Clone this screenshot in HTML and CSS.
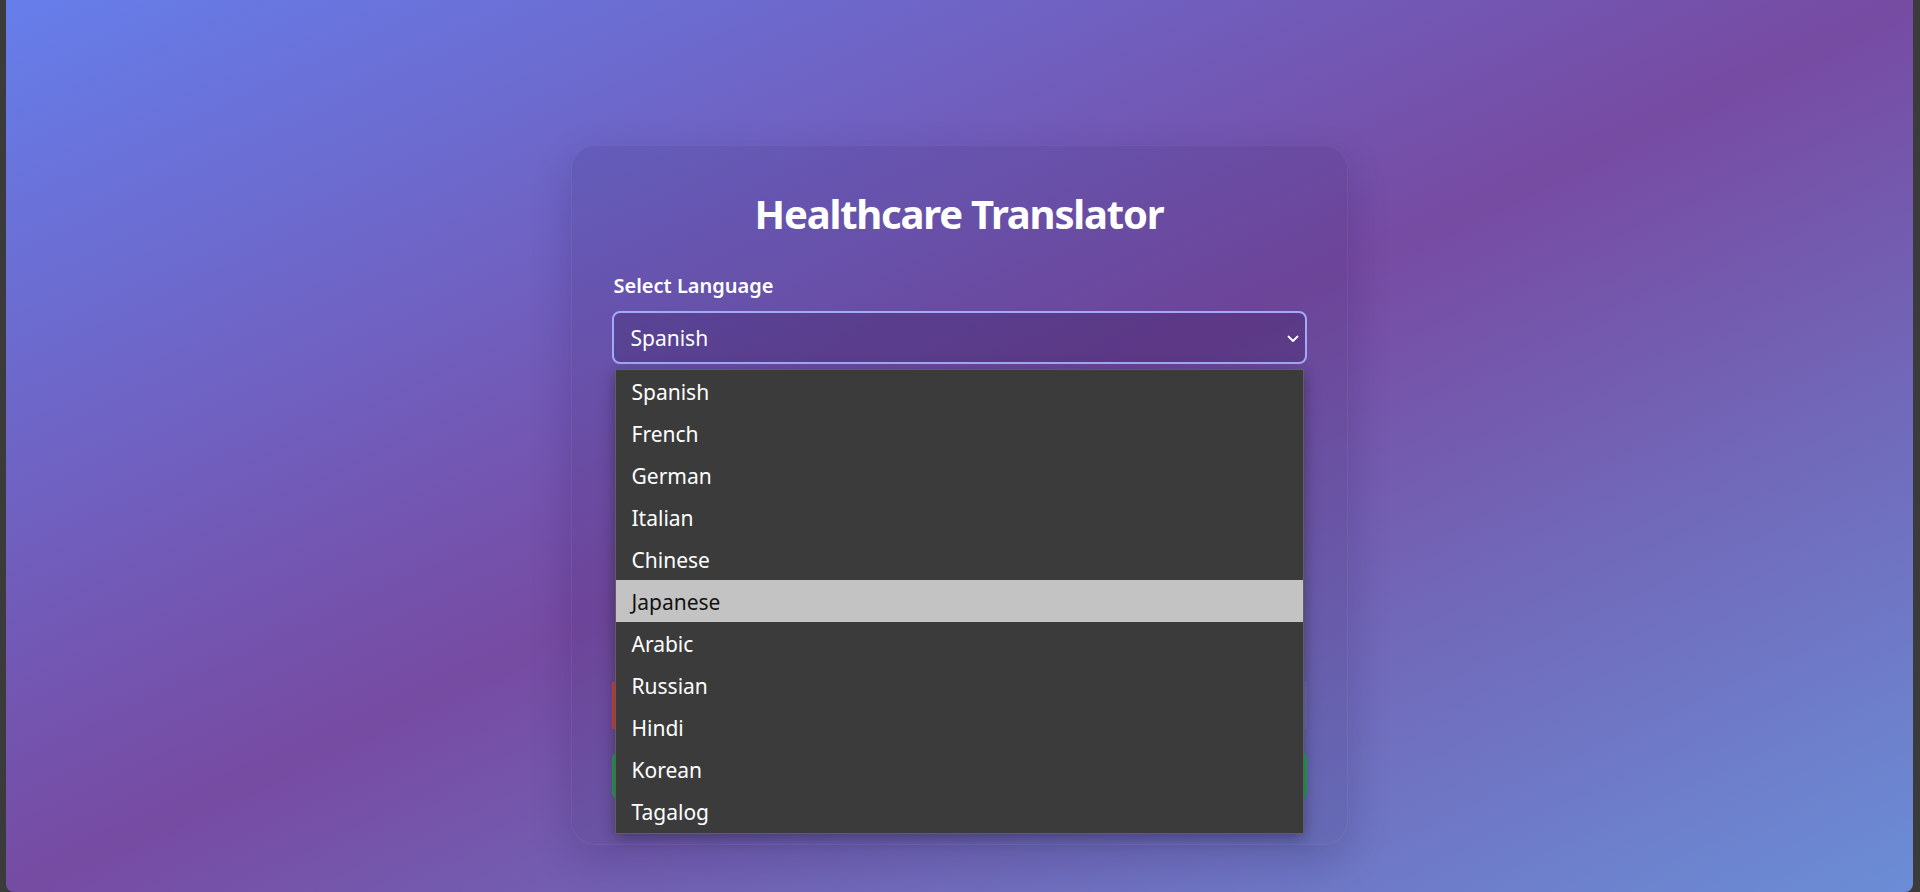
FILE: index.html
```html
<!DOCTYPE html>
<html lang="en">
<head>
<meta charset="utf-8">
<title>Healthcare Translator</title>
<link rel="stylesheet" href="styles.css">
</head>
<body>
<div class="window">
  <main class="page">
    <section class="card">
      <h1 class="title">Healthcare Translator</h1>
      <label class="field-label">Select Language</label>
      <div class="select-wrap">
        <div class="select">
          <span class="select-value">Spanish</span>
          <svg class="chevron" width="12" height="8" viewBox="0 0 12 8" aria-hidden="true"><path d="M1.5 1.5 L6 6 L10.5 1.5" fill="none" stroke="#ffffff" stroke-width="1.8" stroke-linecap="round" stroke-linejoin="round"/></svg>
        </div>
        <ul class="dropdown">
          <li class="option">Spanish</li>
          <li class="option">French</li>
          <li class="option">German</li>
          <li class="option">Italian</li>
          <li class="option">Chinese</li>
          <li class="option option-active">Japanese</li>
          <li class="option">Arabic</li>
          <li class="option">Russian</li>
          <li class="option">Hindi</li>
          <li class="option">Korean</li>
          <li class="option">Tagalog</li>
        </ul>
      </div>
      <div class="status-box"></div>
      <div class="action-btn"></div>
    </section>
  </main>
</div>
</body>
</html>
```
FILE: styles.css
```css
* { box-sizing: border-box; }

html, body {
  margin: 0;
  padding: 0;
  background: #3b3b3b;
}

body {
  font-family: "Noto Sans", "Open Sans", sans-serif;
  color: #ffffff;
}

.window {
  margin: 0 7px 0 6px;
  height: 892px;
  border-radius: 0 0 8px 8px;
  overflow: hidden;
  background: linear-gradient(to bottom right, #667eea 0%, #764ba2 50%, #6b8dd6 100%);
}

.page {
  display: flex;
  justify-content: center;
  padding-top: 145px;
  padding-right: 1px;
}

.card {
  width: 777px;
  padding: 44px 40px 45px;
  border: 1px solid rgba(255, 255, 255, 0.06);
  border-radius: 24px;
  background: rgba(30, 15, 70, 0.11);
  box-shadow: 0 16px 40px rgba(20, 10, 60, 0.18);
  display: flex;
  flex-direction: column;
}

.title {
  margin: 0;
  text-align: center;
  font-size: 40px;
  line-height: 48px;
  font-weight: 700;
  letter-spacing: -1.2px;
}

.field-label {
  display: block;
  margin-top: 34px;
  margin-bottom: 11px;
  padding-left: 2px;
  font-size: 20px;
  line-height: 28px;
  font-weight: 600;
}

.select-wrap {
  position: relative;
}

.select {
  height: 53px;
  display: flex;
  align-items: center;
  justify-content: space-between;
  padding: 0 6px 0 17px;
  border: 2px solid #a3a9f7;
  border-radius: 8px;
  background: rgba(35, 15, 70, 0.22);
  font-size: 21px;
}

.chevron {
  display: block;
  margin-top: 2px;
}

.dropdown {
  position: absolute;
  top: calc(100% + 5px);
  left: 3px;
  right: 3px;
  margin: 0;
  padding: 0 0 1px;
  list-style: none;
  background: #3b3b3b;
  border: 1px solid #5f5f5f;
  box-shadow: 0 4px 14px rgba(0, 0, 0, 0.35);
  z-index: 10;
}

.option {
  height: 42px;
  line-height: 42px;
  padding-left: 16px;
  padding-top: 1px;
  font-size: 21px;
  color: #ffffff;
}

.option-active {
  background: #c3c3c3;
  color: #111111;
}

.status-box {
  margin-top: 318px;
  height: 47px;
  border-left: 3px solid #d2433a;
  background: rgba(255, 255, 255, 0.05);
}

.action-btn {
  margin-top: 23px;
  height: 47px;
  border-radius: 6px;
  background: #24a150;
}
```
